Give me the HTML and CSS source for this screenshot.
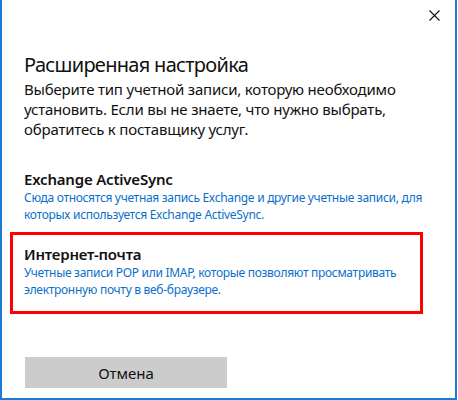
FILE: index.html
```html
<!DOCTYPE html>
<html lang="ru">
<head>
  <meta charset="UTF-8">
  <meta name="viewport" content="width=device-width, initial-scale=1.0">
  <title>Расширенная настройка</title>
  <link rel="stylesheet" href="styles.css">
</head>
<body>
  <div class="window">
    <div class="titlebar">
      <button class="close" aria-label="Закрыть">
        <svg width="11" height="11" viewBox="0 0 11 11">
          <path d="M0.5 0.5 L10.5 10.5 M10.5 0.5 L0.5 10.5" stroke="#111" stroke-width="1.1" fill="none"/>
        </svg>
      </button>
    </div>

    <div class="content">
      <h1>Расширенная настройка</h1>
      <p class="intro">Выберите тип учетной записи, которую необходимо<br>установить. Если вы не знаете, что нужно выбрать,<br>обратитесь к поставщику услуг.</p>

      <div class="option">
        <div class="option-title">Exchange ActiveSync</div>
        <div class="option-desc">Сюда относятся учетная запись Exchange и другие учетные записи, для<br>которых используется Exchange ActiveSync.</div>
      </div>

      <div class="option selected">
        <div class="option-title">Интернет-почта</div>
        <div class="option-desc">Учетные записи POP или IMAP, которые позволяют просматривать<br>электронную почту в веб-браузере.</div>
      </div>
    </div>

    <div class="footer">
      <button class="cancel">Отмена</button>
    </div>
  </div>
</body>
</html>
```

FILE: styles.css
```css
body {
  margin: 0;
  font-family: "Noto Sans", "Open Sans", sans-serif;
  background-color: #ffffff;
}

.window {
  width: 457px;
  height: 400px;
  box-sizing: border-box;
  border-left: 2px solid #1a7ad4;
  border-right: 2px solid #1a7ad4;
  border-bottom: 2px solid #1a7ad4;
  display: flex;
  flex-direction: column;
}

.titlebar {
  display: flex;
  justify-content: flex-end;
  padding: 10px 15px 0 0;
  height: 26px;
}

.close {
  width: 11px;
  height: 11px;
  padding: 0;
  border: none;
  background: none;
  display: flex;
}

.content {
  padding: 0 0 0 8px;
}

h1 {
  margin: 17px 0 0 14px;
  font-size: 20px;
  font-weight: normal;
  line-height: 24px;
  letter-spacing: -0.7px;
  color: #111111;
}

.intro {
  margin: 2px 0 0 14px;
  font-size: 15px;
  line-height: 20px;
  letter-spacing: -0.2px;
  color: #111111;
}

.option {
  margin: 30px 32px 0 0;
  padding: 0 0 0 14px;
}

.option-title {
  font-size: 15px;
  font-weight: 600;
  line-height: 20px;
  letter-spacing: -0.2px;
  color: #111111;
}

.option-desc {
  font-size: 12px;
  line-height: 17px;
  letter-spacing: -0.3px;
  white-space: nowrap;
  color: #0a6fcb;
}

.option.selected {
  margin-top: 9px;
  padding: 9px 0 13px 11px;
  border: 3px solid #ff0000;
}

.footer {
  margin-top: auto;
  padding: 0 0 10px 23px;
}

.cancel {
  width: 202px;
  height: 31px;
  border: none;
  background-color: #cccccc;
  font-family: "Noto Sans", "Open Sans", sans-serif;
  font-size: 15px;
  color: #111111;
}
```
